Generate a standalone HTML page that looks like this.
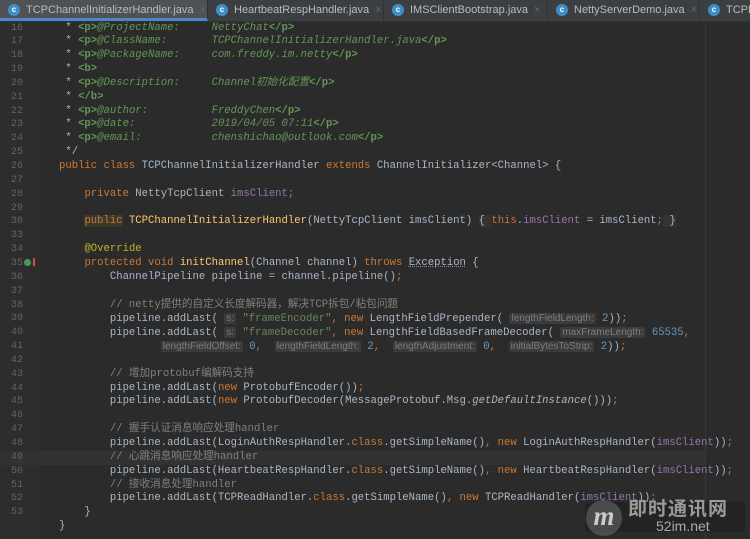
<!DOCTYPE html><html><head><meta charset="utf-8"><style>
body{margin:0;width:750px;height:539px;overflow:hidden;background:#2b2b2b;font-family:"Liberation Mono","Noto Sans CJK SC",monospace;}
.tabs{position:absolute;left:0;top:0;width:750px;height:21px;background:#3c3f41;border-bottom:1px solid #323232;font-family:"Liberation Sans","Noto Sans CJK SC",sans-serif;font-size:11px;color:#bbb}
.tab{position:absolute;top:0;height:21px;line-height:21px;border-right:1px solid #323232;padding-left:26px;box-sizing:border-box}
.tab .ic{position:absolute;left:8px;top:4px;width:12px;height:12px;border-radius:50%;background:#3d8fc6;color:#fff;font-size:8px;line-height:12px;text-align:center;font-weight:bold}
.tab .x{color:#666;margin-left:6px}
.active{background:#4e5254;border-bottom:3px solid #4a88c7}
.gut{position:absolute;left:0;top:22px;width:40px;height:517px;background:#2d2d2d}
.row{position:absolute;left:0;height:13.8px;line-height:13.8px;font-size:10.6px;white-space:pre;color:#a9b7c6}
.ln{position:absolute;left:3px;width:20px;text-align:right;color:#606366;font-size:10px}
.c{position:absolute;left:59px}
.k{color:#cc7832}.d{color:#629755;font-style:italic}.dt{color:#629755;font-weight:bold}.s{color:#6a8759}.n{color:#6897bb}.f{color:#9876aa}.cm{color:#808080}.a{color:#bbb529}.m{color:#ffc66d}.i{font-style:italic}
.h{color:#7a7e82;background:#3b3b3b;font-family:"Liberation Sans",sans-serif;font-size:10px;padding:0 2px;border-radius:2px}
.mg{position:absolute;left:705px;top:22px;width:1px;height:517px;background:#393939}
</style></head><body>
<div class="tabs">
<div class="tab active" style="left:0;width:208px"><span class="ic">c</span>TCPChannelInitializerHandler.java<span class="x">×</span></div>
<div class="tab" style="left:208px;width:176px"><span class="ic">c</span>HeartbeatRespHandler.java<span class="x">×</span></div>
<div class="tab" style="left:384px;width:164px"><span class="ic">c</span>IMSClientBootstrap.java<span class="x">×</span></div>
<div class="tab" style="left:548px;width:152px"><span class="ic">c</span>NettyServerDemo.java<span class="x">×</span></div>
<div class="tab" style="left:700px;width:60px"><span class="ic">c</span>TCPR</div>
</div>
<div class="gut"></div><div class="mg"></div>
<div id="code"></div>
<div style="position:absolute;left:585px;top:502px;width:160px;height:30px;background:rgba(30,30,30,.6)"></div>
<div style="position:absolute;left:586px;top:500px;width:36px;height:36px;border-radius:50%;background:rgba(110,110,110,.55);color:#ccc;font:italic bold 27px 'Liberation Serif',serif;text-align:center;line-height:32px">m</div>
<div style="position:absolute;left:628px;top:494px;color:#9a9a9a;font:bold 19px 'Noto Sans CJK SC',sans-serif;letter-spacing:1px">即时通讯网</div>
<div style="position:absolute;left:656px;top:518px;color:#aaa;font:14px 'Liberation Sans',sans-serif">52im.net</div>
<script>
const L=[
[16,' * <span class="dt">&lt;p&gt;</span><span class="d">@ProjectName:     NettyChat</span><span class="dt">&lt;/p&gt;</span>'],
[17,' * <span class="dt">&lt;p&gt;</span><span class="d">@ClassName:       TCPChannelInitializerHandler.java</span><span class="dt">&lt;/p&gt;</span>'],
[18,' * <span class="dt">&lt;p&gt;</span><span class="d">@PackageName:     com.freddy.im.netty</span><span class="dt">&lt;/p&gt;</span>'],
[19,' * <span class="dt">&lt;b&gt;</span>'],
[20,' * <span class="dt">&lt;p&gt;</span><span class="d">@Description:     Channel初始化配置</span><span class="dt">&lt;/p&gt;</span>'],
[21,' * <span class="dt">&lt;/b&gt;</span>'],
[22,' * <span class="dt">&lt;p&gt;</span><span class="d">@author:          FreddyChen</span><span class="dt">&lt;/p&gt;</span>'],
[23,' * <span class="dt">&lt;p&gt;</span><span class="d">@date:            2019/04/05 07:11</span><span class="dt">&lt;/p&gt;</span>'],
[24,' * <span class="dt">&lt;p&gt;</span><span class="d">@email:           chenshichao@outlook.com</span><span class="dt">&lt;/p&gt;</span>'],
[25,' */'],
[26,'<span class="k">public class</span> TCPChannelInitializerHandler <span class="k">extends</span> ChannelInitializer&lt;Channel&gt; {'],
[27,''],
[28,'    <span class="k">private</span> NettyTcpClient <span class="f">imsClient</span><span class="k">;</span>'],
[29,''],
[30,'    <span class="k" style="background:#3b3a2a">public</span> <span class="m">TCPChannelInitializerHandler</span>(NettyTcpClient imsClient) <span style="background:#333">{ </span><span class="k">this</span>.<span class="f">imsClient</span> = imsClient<span class="k">;</span><span style="background:#333"> }</span>'],
[33,''],
[34,'    <span class="a">@Override</span>'],
[35,'    <span class="k">protected void</span> <span class="m">initChannel</span>(Channel channel) <span class="k">throws</span> <span style="text-decoration:underline dotted #888">Exception</span> {'],
[36,'        ChannelPipeline pipeline = channel.pipeline()<span class="k">;</span>'],
[37,''],
[38,'        <span class="cm">// netty提供的自定义长度解码器，解决TCP拆包/粘包问题</span>'],
[39,'        pipeline.addLast( <span class="h">s:</span> <span class="s">"frameEncoder"</span><span class="k">, new</span> LengthFieldPrepender( <span class="h">lengthFieldLength:</span> <span class="n">2</span>))<span class="k">;</span>'],
[40,'        pipeline.addLast( <span class="h">s:</span> <span class="s">"frameDecoder"</span><span class="k">, new</span> LengthFieldBasedFrameDecoder( <span class="h">maxFrameLength:</span> <span class="n">65535</span><span class="k">,</span>'],
[41,'                <span class="h">lengthFieldOffset:</span> <span class="n">0</span><span class="k">,</span>  <span class="h">lengthFieldLength:</span> <span class="n">2</span><span class="k">,</span>  <span class="h">lengthAdjustment:</span> <span class="n">0</span><span class="k">,</span>  <span class="h">initialBytesToStrip:</span> <span class="n">2</span>))<span class="k">;</span>'],
[42,''],
[43,'        <span class="cm">// 增加protobuf编解码支持</span>'],
[44,'        pipeline.addLast(<span class="k">new</span> ProtobufEncoder())<span class="k">;</span>'],
[45,'        pipeline.addLast(<span class="k">new</span> ProtobufDecoder(MessageProtobuf.Msg.<span class="i">getDefaultInstance</span>()))<span class="k">;</span>'],
[46,''],
[47,'        <span class="cm">// 握手认证消息响应处理handler</span>'],
[48,'        pipeline.addLast(LoginAuthRespHandler.<span class="k">class</span>.getSimpleName()<span class="k">, new</span> LoginAuthRespHandler(<span class="f">imsClient</span>))<span class="k">;</span>'],
[49,'        <span class="cm">// 心跳消息响应处理handler</span>'],
[50,'        pipeline.addLast(HeartbeatRespHandler.<span class="k">class</span>.getSimpleName()<span class="k">, new</span> HeartbeatRespHandler(<span class="f">imsClient</span>))<span class="k">;</span>'],
[51,'        <span class="cm">// 接收消息处理handler</span>'],
[52,'        pipeline.addLast(TCPReadHandler.<span class="k">class</span>.getSimpleName()<span class="k">, new</span> TCPReadHandler(<span class="f">imsClient</span>))<span class="k">;</span>'],
[53,'    }'],
['','}']];
let h='';L.forEach((r,i)=>{const t=21.5+i*13.85;const cur=r[0]==49?'background:#323232;width:705px;':'';
h+=`<div class="row" style="top:${t}px;${cur}"><span class="ln">${r[0]}</span><span class="c">${r[1]}</span></div>`});
document.getElementById('code').innerHTML=h;
</script>
<div style="position:absolute;left:24px;top:259px;width:7px;height:7px;border-radius:50%;background:#499c54"></div>
<div style="position:absolute;left:33px;top:258px;width:2px;height:8px;background:#c75450"></div>
</body></html>
